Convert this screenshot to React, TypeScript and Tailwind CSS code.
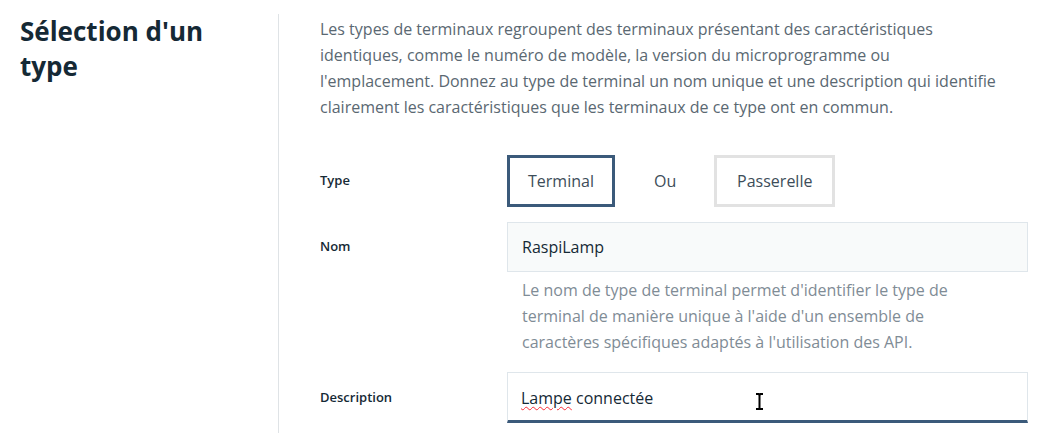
import React from 'react';

const font = { fontFamily: '"Open Sans", "Noto Sans", sans-serif' };

const Row = ({ label, children }: any) => (
  <div className="flex items-center">
    <div className="w-[187px] shrink-0 text-[13px] font-semibold text-[#152935]">{label}</div>
    <div className="flex-1">{children}</div>
  </div>
);

export default function App() {
  return (
    <div className="flex h-[433px] w-[1049px] overflow-hidden bg-white" style={font}>
      <div className="w-[278px] shrink-0 pl-5 pt-[14px]">
        <h2 className="text-[26px] font-bold leading-[35px] text-[#152935]">
          Sélection d'un<br />type
        </h2>
      </div>
      <div className="mt-[14px] w-px bg-[#dfe3e6]" />
      <div className="flex-1 pl-[41px] pr-[21px] pt-[16px]">
        <p className="text-[16px] leading-[26px] text-[#5a6872]">
          Les types de terminaux regroupent des terminaux présentant des caractéristiques<br />
          identiques, comme le numéro de modèle, la version du microprogramme ou<br />
          l'emplacement. Donnez au type de terminal un nom unique et une description qui identifie<br />
          clairement les caractéristiques que les terminaux de ce type ont en commun.
        </p>

        <div className="mt-[35px]">
          <Row label="Type">
            <div className="flex items-center">
              <button className="flex h-[52px] w-[108px] items-center justify-center border-[3px] border-[#3b5a7a] text-[16px] text-[#3d4d59]">
                Terminal
              </button>
              <span className="ml-[39px] mr-[38px] text-[16px] text-[#3d4d59]">Ou</span>
              <button className="flex h-[52px] w-[121px] items-center justify-center border-[3px] border-[#e2e2e2] text-[16px] text-[#3d4d59]">
                Passerelle
              </button>
            </div>
          </Row>
        </div>

        <div className="mt-[15px]">
          <Row label="Nom">
            <div className="flex h-[50px] items-center border border-[#dfe6eb] bg-[#f8fafa] px-[14px] text-[16px] text-[#152935]">
              RaspiLamp
            </div>
          </Row>
        </div>
        <div className="ml-[202px] mt-[5px] text-[16px] leading-[26px] text-[#7f8c96]">
          Le nom de type de terminal permet d'identifier le type de<br />
          terminal de manière unique à l'aide d'un ensemble de<br />
          caractères spécifiques adaptés à l'utilisation des API.
        </div>

        <div className="mt-[17px]">
          <Row label="Description">
            <div className="relative flex h-[51px] items-center border border-b-[3px] border-[#dfe6eb] border-b-[#3b5a7a] bg-white px-[13px] pt-[3px] text-[16px] text-[#152935]">
              <span>
                <span className="underline decoration-wavy decoration-red-500 decoration-1 underline-offset-2">Lampe</span> connectée
              </span>
              <svg className="absolute left-[247px] top-[20px]" width="9" height="17" viewBox="0 0 9 17">
                <path d="M1 1h2.5l1 1 1-1H8M4.5 2v13M1 16h2.5l1-1 1 1H8" stroke="#000" strokeWidth="2" fill="none" />
              </svg>
            </div>
          </Row>
        </div>
      </div>
    </div>
  );
}
